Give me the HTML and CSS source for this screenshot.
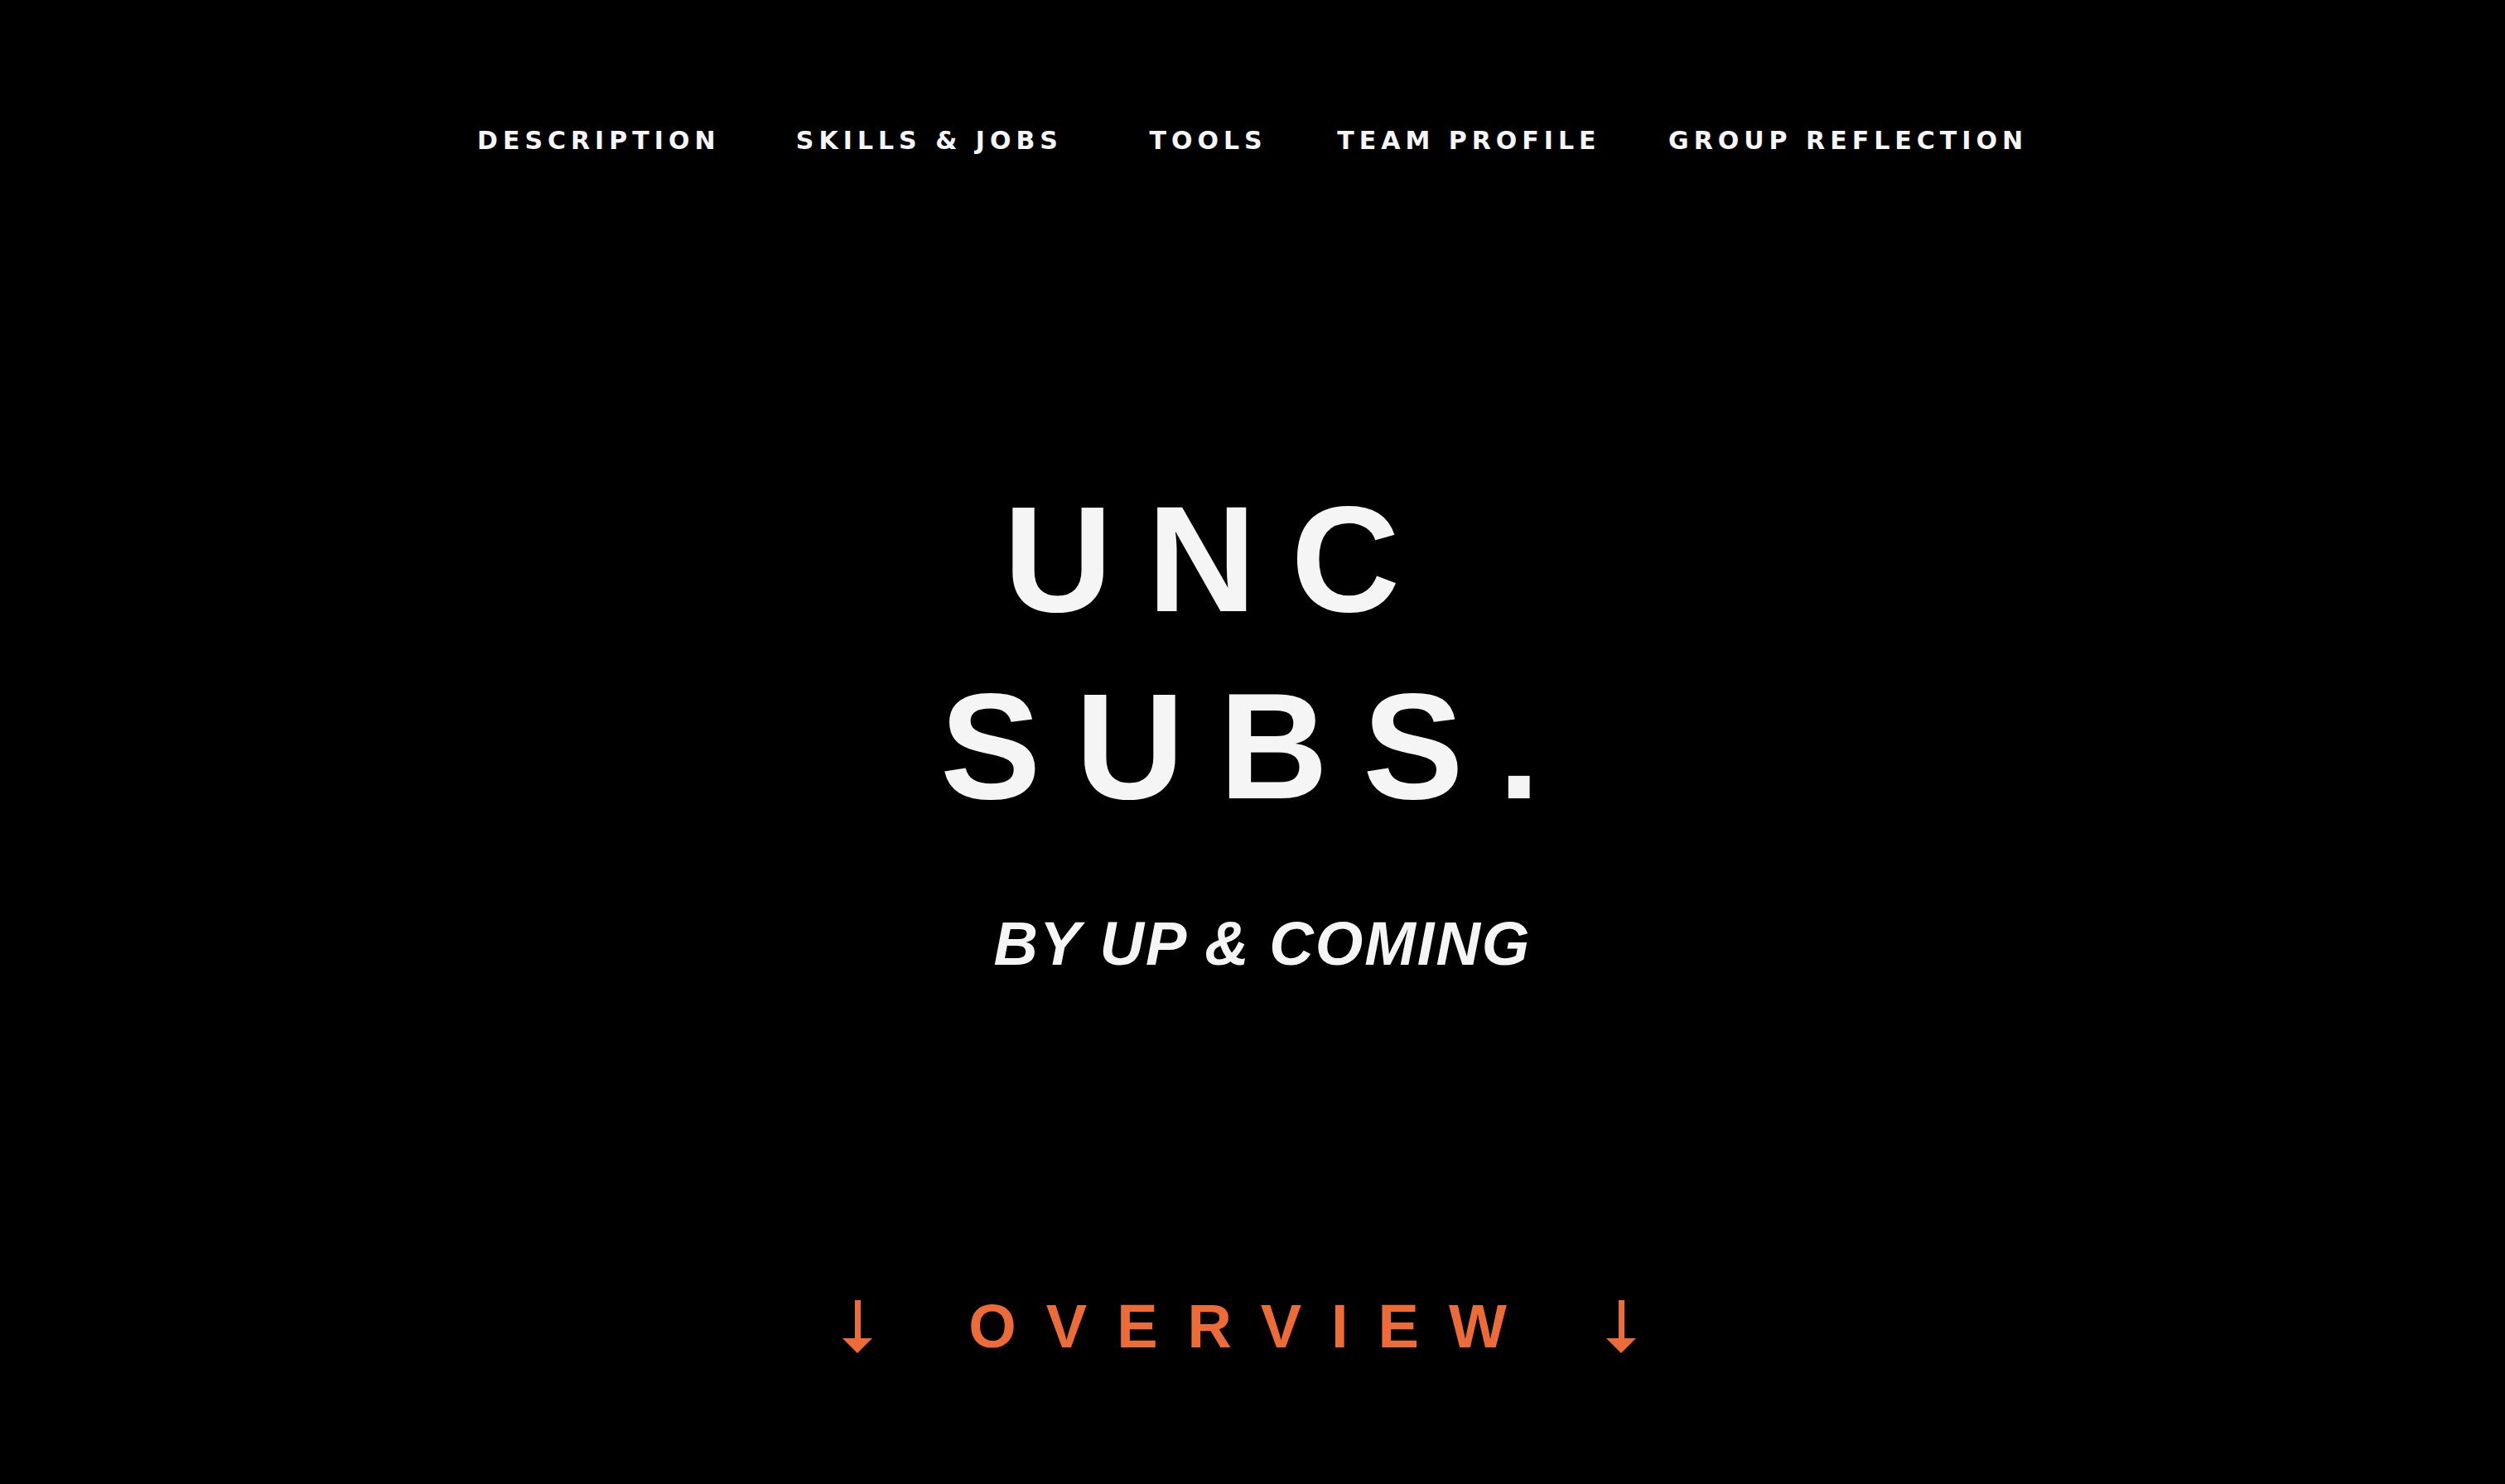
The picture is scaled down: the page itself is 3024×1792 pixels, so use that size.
FILE: index.html
```html
<!DOCTYPE html>
<html lang="en">
<head>
<meta charset="utf-8">
<meta name="viewport" content="width=device-width, initial-scale=1">
<title>UNC SUBS.</title>
<link rel="stylesheet" href="styles.css">
</head>
<body>
<header class="site-header">
<nav class="nav" aria-label="Main">
<a href="#description">DESCRIPTION</a>
<a href="#skills">SKILLS &amp; JOBS</a>
<a href="#tools">TOOLS</a>
<a href="#team">TEAM PROFILE</a>
<a href="#reflection">GROUP REFLECTION</a>
</nav>
</header>
<main class="hero">
<h1 class="title">UNC&nbsp;<br>SUBS.</h1>
<p class="byline">BY UP &amp; COMING</p>
<a class="overview" href="#overview">
<svg class="arrow" viewBox="0 0 36 64" aria-hidden="true"><path d="M15 0h7v46h14L18 64 0 46h15z"/></svg>
<span class="overview-label">OVERVIEW</span>
<svg class="arrow" viewBox="0 0 36 64" aria-hidden="true"><path d="M15 0h7v46h14L18 64 0 46h15z"/></svg>
</a>
</main>
</body>
</html>
```
FILE: styles.css
```css
* {
  box-sizing: border-box;
}

body {
  margin: 0;
  min-height: 100vh;
  background: #000;
  color: #f5f5f5;
  font-family: "Liberation Sans", Arial, sans-serif;
  font-weight: 700;
}

a {
  color: inherit;
  text-decoration: none;
}

.site-header {
  padding: 150px 24px 0;
}

.nav {
  display: grid;
  grid-template-columns: 387fr 429fr 228fr 402fr 426fr;
  max-width: 1872px;
  margin: 0 auto;
  font-family: "DejaVu Sans", sans-serif;
  font-size: 30px;
  line-height: 40px;
  letter-spacing: 6px;
  white-space: nowrap;
}

.hero {
  display: flex;
  flex-direction: column;
  align-items: center;
  padding: 372px 24px 120px;
}

.title {
  margin: 0;
  padding-left: 12px;
  font-size: 182px;
  line-height: 226px;
  letter-spacing: 42px;
  text-align: center;
}

.byline {
  margin: 86px 0 0;
  padding-left: 24px;
  font-size: 74px;
  font-style: italic;
  line-height: 80px;
  letter-spacing: 2px;
}

.overview {
  display: flex;
  align-items: center;
  gap: 116px;
  margin-top: 382px;
  padding-right: 32px;
  color: #ed6b37;
  font-size: 74px;
  line-height: 80px;
}

.overview-label {
  margin-right: -32px;
  letter-spacing: 36px;
}

.arrow {
  width: 36px;
  height: 64px;
  fill: currentColor;
}
```
